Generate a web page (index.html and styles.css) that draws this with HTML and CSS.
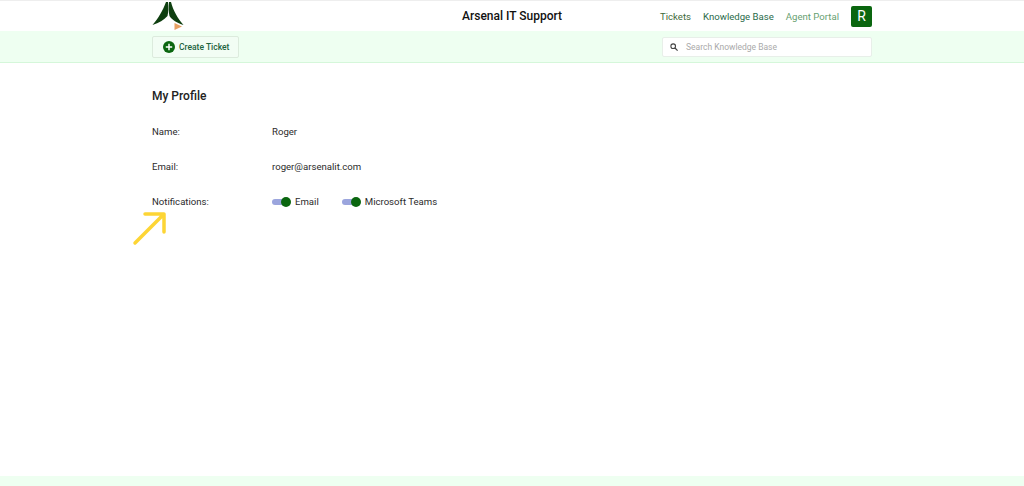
FILE: index.html
```html
<!DOCTYPE html>
<html lang="en">
<head>
    <meta charset="UTF-8">
    <title>Arsenal IT Support</title>
    <link rel="stylesheet" href="styles.css">
</head>
<body>

    <!-- Top Header -->
    <div class="header">
        <div class="wrap header-row">
            <svg class="logo" width="32" height="30" viewBox="0 0 32 30">
                <path d="M14 1 L16 1 C16.500 6 16.500 11 15.500 15 C12 19 7 22 0.500 24 C6 18 11 9 14 1 Z" fill="#0f3f10"/>
                <path d="M17 1 L19 1 C21 9 26 18 31.500 24 C25 22 20 19 17.500 15 C16.500 11 16.500 6 17 1 Z" fill="#0f3f10"/>
                <path d="M22.500 22 L30 25.500 L22.500 29 Z" fill="#e8a063"/>
            </svg>
            <div class="site-title">Arsenal IT Support</div>
            <div class="nav-links">
                <a class="nav-tickets" href="#">Tickets</a>
                <a class="nav-kb" href="#">Knowledge Base</a>
                <a class="nav-agent" href="#">Agent Portal</a>
                <div class="avatar">R</div>
            </div>
        </div>
    </div>

    <!-- Action Bar -->
    <div class="action-bar">
        <div class="wrap action-row">
            <button class="create-btn">
                <svg width="12" height="12" viewBox="0 0 12 12">
                    <circle cx="6" cy="6" r="6" fill="#0a660f"/>
                    <path d="M6 2.800 V9.200 M2.800 6 H9.200" stroke="#fff" stroke-width="1.500"/>
                </svg>
                Create Ticket
            </button>
            <div class="search-box">
                <svg width="8" height="8" viewBox="0 0 8 8">
                    <circle cx="3.200" cy="3.200" r="2.300" fill="none" stroke="#444" stroke-width="1.100"/>
                    <path d="M5 5 L7.600 7.600" stroke="#444" stroke-width="1.200"/>
                </svg>
                <span>Search Knowledge Base</span>
            </div>
        </div>
    </div>

    <!-- Main Content -->
    <div class="wrap content">
        <h1>My Profile</h1>
        <div class="profile-row">
            <div class="label">Name:</div>
            <div>Roger</div>
        </div>
        <div class="profile-row">
            <div class="label">Email:</div>
            <div>roger@arsenalit.com</div>
        </div>
        <div class="profile-row">
            <div class="label">Notifications:</div>
            <div class="toggles">
                <div class="toggle-item"><span class="toggle"></span>Email</div>
                <div class="toggle-item"><span class="toggle"></span>Microsoft Teams</div>
            </div>
            <svg class="arrow" width="36" height="36" viewBox="0 0 36 36">
                <path d="M3 33 L32 4 M13 4 H32 V22" fill="none" stroke="#fdd535" stroke-width="3.500" stroke-linecap="round" stroke-linejoin="round"/>
            </svg>
        </div>
    </div>

    <div class="footer"></div>

</body>
</html>
```

FILE: styles.css
```css
body {
    font-family: 'Roboto', sans-serif;
    margin: 0;
    height: 486px;
    overflow: hidden;
    background: #fff;
    color: #2b2b2b;
    font-size: 9.600px;
    display: flex;
    flex-direction: column;
}
.wrap {
    width: 720px;
    margin: 0 auto;
}
/* Header */
.header {
    height: 30px;
    border-top: 1px solid #eee;
}
.header-row {
    position: relative;
    display: flex;
    align-items: center;
    justify-content: space-between;
    height: 30px;
}
.logo {
    align-self: flex-start;
}
.site-title {
    position: absolute;
    left: 310px;
    font-size: 12px;
    font-weight: 500;
    color: #111;
}
.nav-links {
    display: flex;
    align-items: center;
    gap: 12px;
}
.nav-links a {
    font-size: 9.600px;
    text-decoration: none;
}
.nav-tickets {
    color: #3f6b3a;
}
.nav-kb {
    color: #2a6b4a;
}
.nav-agent {
    color: #689f72;
}
.avatar {
    width: 21px;
    height: 21px;
    background: #0a660f;
    color: #fff;
    border-radius: 2px;
    font-size: 14px;
    line-height: 21px;
    text-align: center;
}
/* Action bar */
.action-bar {
    height: 31px;
    background: #eefff1;
    border-bottom: 1px solid #d5f7da;
}
.action-row {
    display: flex;
    align-items: center;
    justify-content: space-between;
    height: 31px;
}
.create-btn {
    display: flex;
    align-items: center;
    gap: 4px;
    height: 22px;
    padding: 0 9px 0 10px;
    background: #f2fdf4;
    border: 1px solid #dcebdd;
    border-radius: 2px;
    color: #1d6340;
    font-family: inherit;
    font-size: 8.500px;
    font-weight: 500;
}
.search-box {
    display: flex;
    align-items: center;
    gap: 8px;
    width: 210px;
    height: 20px;
    padding-left: 7px;
    box-sizing: border-box;
    background: #fff;
    border: 1px solid #e8efe9;
    border-radius: 2px;
    color: #aaa;
    font-size: 8.500px;
}
/* Profile */
.content {
    flex: 1;
    position: relative;
}
h1 {
    font-size: 12px;
    font-weight: 500;
    color: #222;
    margin: 26px 0 22px;
    line-height: 14px;
}
.profile-row {
    display: flex;
    height: 35px;
    line-height: 14px;
    position: relative;
}
.label {
    width: 120px;
}
.toggles {
    display: flex;
    gap: 23px;
}
.toggle-item {
    display: flex;
    align-items: center;
    height: 14px;
}
.toggle {
    width: 18px;
    height: 6px;
    background: #9ba5dd;
    border-radius: 3px;
    margin-right: 5px;
    position: relative;
}
.toggle::after {
    content: "";
    position: absolute;
    right: -1px;
    top: -2px;
    width: 10px;
    height: 10px;
    border-radius: 50%;
    background: #0a660f;
}
.arrow {
    position: absolute;
    left: -20px;
    top: 15px;
}
/* Footer */
.footer {
    height: 10px;
    background: #eefff1;
}
```
